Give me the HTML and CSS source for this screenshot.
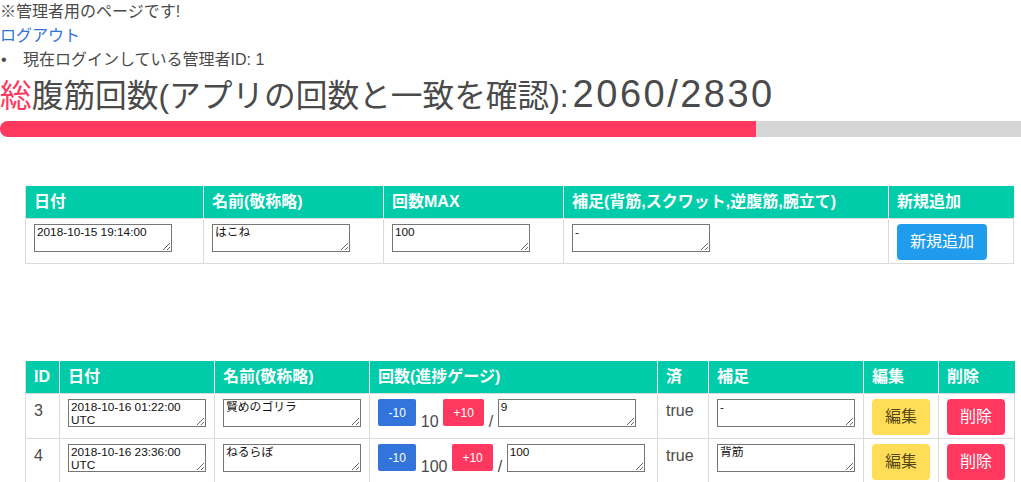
FILE: index.html
```html
<!DOCTYPE html>
<html lang="ja">
<head>
<meta charset="utf-8">
<title>管理者用ページ</title>
<link rel="stylesheet" href="styles.css">
</head>
<body>
<p class="line">※管理者用のページです!</p>
<p class="line"><a class="link" href="#">ログアウト</a></p>
<ul class="info-list">
  <li class="info-item">現在ログインしている管理者ID: 1</li>
</ul>
<h1 class="total"><span class="total-accent">総</span>腹筋回数(アプリの回数と一致を確認):<span class="total-num">2060/2830</span></h1>
<div class="progress"><div class="progress-bar" style="width:74.05%"></div></div>

<div class="tables">
  <table class="data-table new-table">
    <colgroup>
      <col style="width:178px"><col style="width:180px"><col style="width:180px"><col style="width:325px"><col style="width:125px">
    </colgroup>
    <thead>
      <tr><th>日付</th><th>名前(敬称略)</th><th>回数MAX</th><th>補足(背筋,スクワット,逆腹筋,腕立て)</th><th>新規追加</th></tr>
    </thead>
    <tbody>
      <tr>
        <td><textarea class="field">2018-10-15 19:14:00</textarea></td>
        <td><textarea class="field">はこね</textarea></td>
        <td><textarea class="field">100</textarea></td>
        <td><textarea class="field">-</textarea></td>
        <td><button class="btn btn-info">新規追加</button></td>
      </tr>
    </tbody>
  </table>

  <table class="data-table list-table">
    <colgroup>
      <col style="width:34px"><col style="width:155px"><col style="width:155px"><col style="width:288px"><col style="width:51px"><col style="width:155px"><col style="width:75px"><col style="width:76px">
    </colgroup>
    <thead>
      <tr><th>ID</th><th>日付</th><th>名前(敬称略)</th><th>回数(進捗ゲージ)</th><th>済</th><th>補足</th><th>編集</th><th>削除</th></tr>
    </thead>
    <tbody>
      <tr>
        <td>3</td>
        <td><textarea class="field">2018-10-16 01:22:00 UTC</textarea></td>
        <td><textarea class="field">賢めのゴリラ</textarea></td>
        <td><button class="btn btn-small btn-link">-10</button> 10 <button class="btn btn-small btn-danger">+10</button> / <textarea class="field">9</textarea></td>
        <td>true</td>
        <td><textarea class="field">-</textarea></td>
        <td><button class="btn btn-warning">編集</button></td>
        <td><button class="btn btn-danger">削除</button></td>
      </tr>
      <tr>
        <td>4</td>
        <td><textarea class="field">2018-10-16 23:36:00 UTC</textarea></td>
        <td><textarea class="field">ねるらぼ</textarea></td>
        <td><button class="btn btn-small btn-link">-10</button> 100 <button class="btn btn-small btn-danger">+10</button> / <textarea class="field">100</textarea></td>
        <td>true</td>
        <td><textarea class="field">背筋</textarea></td>
        <td><button class="btn btn-warning">編集</button></td>
        <td><button class="btn btn-danger">削除</button></td>
      </tr>
    </tbody>
  </table>
</div>
</body>
</html>
```
FILE: styles.css
```css
html, body {
  margin: 0;
  padding: 0;
  background: #fff;
}
body {
  font-family: "Liberation Sans", "Noto Sans CJK JP", sans-serif;
  font-size: 16px;
  line-height: 24px;
  color: #4a4a4a;
  overflow: hidden;
}
.line {
  margin: 0;
}
.link {
  color: #3273dc;
  text-decoration: none;
}
.info-list {
  margin: 0;
  padding: 0;
  list-style: none;
}
.info-item {
  display: flex;
}
.info-item::before {
  content: "•";
  width: 23px;
  flex: none;
  padding-left: 1px;
  box-sizing: border-box;
}
.total {
  margin: 0;
  font-size: 31.7px;
  font-weight: 400;
  line-height: 49px;
  height: 49px;
  white-space: nowrap;
}
.total-accent {
  color: #ff3860;
}
.total-num {
  font-size: 38px;
  line-height: 1;
  letter-spacing: 2.5px;
  margin-left: 4px;
}
.progress {
  height: 16px;
  background: #d5d5d5;
  border-radius: 8px 0 0 8px;
  overflow: hidden;
}
.progress-bar {
  height: 100%;
  background: #ff3860;
}
.tables {
  padding: 49px 8px 0 25px;
}
.data-table {
  border-collapse: collapse;
  table-layout: fixed;
  width: 988px;
}
.list-table {
  margin-top: 97px;
}
.data-table th {
  background: #00ccaa;
  color: #fff;
  font-weight: 700;
  text-align: left;
  padding: 4px 8px;
  line-height: 24px;
  border-left: 1px solid #fff;
  white-space: nowrap;
}
.data-table th:first-child {
  border-left: 1px solid #dbdbdb;
}
.data-table td {
  border: 1px solid #dbdbdb;
  padding: 5px 8px 3px;
  vertical-align: top;
  white-space: nowrap;
}
.field {
  box-sizing: border-box;
  width: 138px;
  height: 28px;
  margin: 0;
  padding: 1px 2px;
  border: 1px solid #767676;
  font-family: "Liberation Sans", "Noto Sans CJK JP", sans-serif;
  font-size: 11.8px;
  line-height: 13px;
  color: #111;
  vertical-align: baseline;
  overflow: hidden;
  white-space: pre-wrap;
}
.btn {
  display: inline-flex;
  align-items: center;
  justify-content: center;
  vertical-align: top;
  box-sizing: border-box;
  height: 36px;
  padding: 0 12px;
  border: 1px solid transparent;
  border-radius: 4px;
  font-family: "Liberation Sans", "Noto Sans CJK JP", sans-serif;
  font-size: 16px;
  line-height: 1.5;
  cursor: pointer;
}
.btn-small {
  height: 27px;
  font-size: 12px;
  padding: 0 9.5px;
  border-radius: 2px;
}
.btn-info {
  background: #209cee;
  color: #fff;
}
.btn-link {
  background: #3273dc;
  color: #fff;
}
.btn-danger {
  background: #ff3860;
  color: #fff;
}
.btn-warning {
  background: #ffdd57;
  color: rgba(0, 0, 0, 0.7);
}
```
